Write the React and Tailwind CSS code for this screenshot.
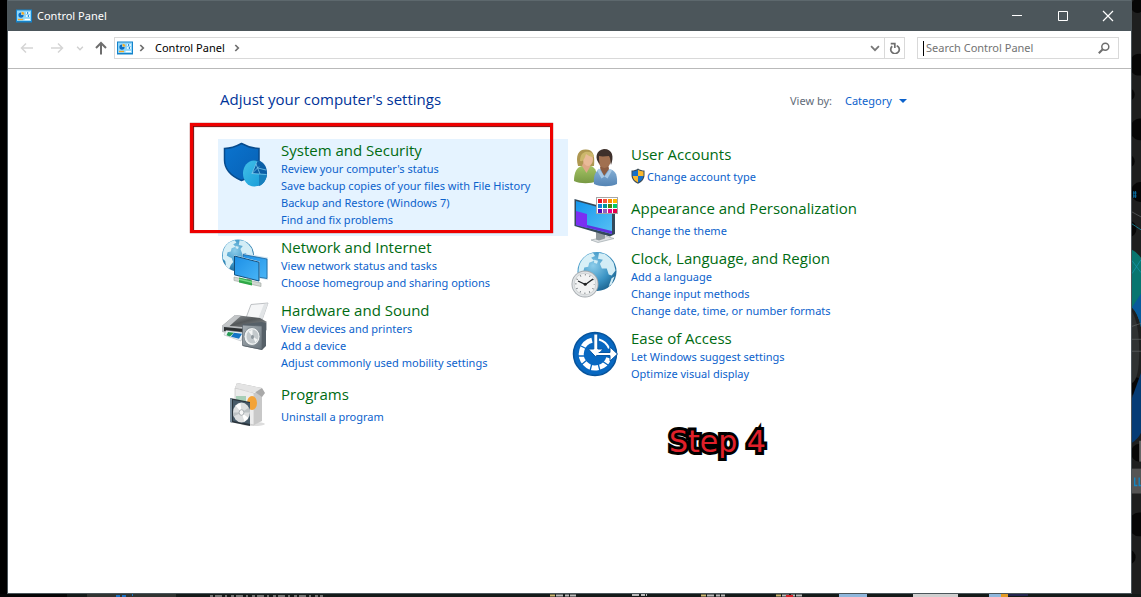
import React from 'react';

const FONT = "font-['Noto_Sans',sans-serif]";

function PanelIcon() {
  return (
    <svg viewBox="0 0 16 14" className="h-[14px] w-4 shrink-0" aria-hidden="true">
      <rect width="16" height="13" y=".5" fill="#1583cb" />
      <rect x="1" y="1.5" width="14" height="10.5" fill="#8ed6fa" />
      <path d="M5 3.500a2.600 2.600 0 1 0 2.600 2.600H5z" fill="#0c6dc4" />
      <path d="M5.600 2.700v2.800h2.800a2.800 2.800 0 0 0-2.800-2.800z" fill="#f7a823" />
      <path d="M10 4h1.500M12.500 4H14M10 7h1.500M12.500 7H14" stroke="#fff" strokeWidth="1.500" />
      <path d="M11 4h1M12 7h1" stroke="#0c6dc4" strokeWidth="1.500" />
      <path d="M2 10.500h5" stroke="#f7a823" strokeWidth="1.300" />
      <path d="M8.500 10.500H14" stroke="#fff" strokeWidth="1.300" />
    </svg>
  );
}

function ArrowIcon({ className, d }) {
  return (
    <svg viewBox="0 0 14 14" className={className} fill="none" stroke="currentColor" aria-hidden="true">
      <path d={d} />
    </svg>
  );
}

function SecurityIcon() {
  return (
    <svg viewBox="0 0 48 48" className="size-12">
      <defs>
        <linearGradient id="sec" x1="0" y1="0" x2="1" y2="1">
          <stop offset="0" stopColor="#0a74cf" />
          <stop offset="1" stopColor="#0760b4" />
        </linearGradient>
        <linearGradient id="pie" x1="0" y1="0" x2="1" y2="1">
          <stop offset="0" stopColor="#42bfe8" />
          <stop offset="1" stopColor="#159bd8" />
        </linearGradient>
      </defs>
      <path d="M3.500 6.500C10 6.500 16 4 20.500 1.500 25 4 31 6.500 38 6.500V18c0 10-7 17-17.500 20.500C10 34 3.500 27 3.500 18z" fill="url(#sec)" stroke="#074b8d" strokeWidth="1.500" />
      <ellipse cx="35" cy="31" rx="11" ry="13" fill="#0d5fa6" />
      <ellipse cx="33" cy="31.500" rx="11" ry="13" fill="url(#pie)" />
      <path d="M31 31.500l5-12.500c5 1.500 9.500 6 9.900 13.500z" fill="#0a5ea6" />
      <path d="M38 32l7.900.5C45.500 38 42 43 38 44z" fill="#1680be" />
      <path d="M31 31.500l5-12M31 31.500l14.500 1M35 22l4 10M31 31.500l7-7M45 28l-8-2" stroke="#8ad7f4" strokeWidth=".7" fill="none" />
    </svg>
  );
}

function Globe({ cx, cy, r, id }) {
  const k = r / 20;
  return (
    <g transform={`translate(${cx} ${cy}) scale(${k})`}>
      <defs>
        <radialGradient id={id} cx=".4" cy=".35" r=".7">
          <stop offset="0" stopColor="#8dcdea" />
          <stop offset=".6" stopColor="#3a93c4" />
          <stop offset="1" stopColor="#1c638f" />
        </radialGradient>
      </defs>
      <circle r="20" fill={`url(#${id})`} />
      <path d="M-17-9c3-6 8-9 13-10l2 3-4 2 3 3-5 2-1 4-4 1-1 4 3 2 3 1 2 5-3 4-2 5-4-4-1-6-3-3c0-5 0-9 2-13z" fill="#d9f0f7" />
      <path d="M2-19l6 1 5 4 4 5 2 8-4 5-3-1-2-6-5 0-2-5 3-4-5-1z" fill="#d3edf6" />
      <path d="M-3-12l4 1-1 3-3-1zM15 7l3-2-3 8-3 2z" fill="#d3edf6" />
    </g>
  );
}

function NetworkIcon() {
  return (
    <svg viewBox="0 0 48 48" className="size-12">
      <defs>
        <linearGradient id="scr" x1="0" y1="0" x2="1" y2="1">
          <stop offset="0" stopColor="#1c8fe6" />
          <stop offset="1" stopColor="#48b4f6" />
        </linearGradient>
      </defs>
      <Globe cx={17} cy={16.500} r={16} id="globeNet" />
      <path d="M21 14l26 4.500V41L24 37z" fill="#cfe4f2" />
      <path d="M22 15.500l24 4.500v19.500L24 36z" fill="url(#scr)" stroke="#17629b" strokeWidth=".8" />
      <path d="M13 16l25.500 6.500V43L13 36.500z" fill="#def0fa" />
      <path d="M13.500 17l24.500 6.200v18.800l-24.500-6.200z" fill="url(#scr)" stroke="#124e7c" strokeWidth="1" />
      <path d="M26 39l4 1v4l-4-1z" fill="#8b9095" />
      <path d="M13 38l27 6v3.500L13 41.500z" fill="#d2d8d3" stroke="#9ba39c" strokeWidth=".6" />
      <path d="M18 38.500l13 3v5L18 43.500z" fill="#2fa847" />
      <path d="M18 39.500l13 3V44l-13-3z" fill="#74d983" />
    </svg>
  );
}

function HardwareIcon() {
  return (
    <svg viewBox="0 0 48 48" className="size-12">
      <defs>
        <linearGradient id="prn" x1="0" y1="0" x2="1" y2="1">
          <stop offset="0" stopColor="#a3a7aa" />
          <stop offset=".5" stopColor="#54585a" />
          <stop offset="1" stopColor="#8d9295" />
        </linearGradient>
        <linearGradient id="spk" x1="0" y1="0" x2="1" y2="1">
          <stop offset="0" stopColor="#a8b0b5" />
          <stop offset="1" stopColor="#69747c" />
        </linearGradient>
      </defs>
      <path d="M25 16L30 2.500l17-1.500-6 17z" fill="#f5f6f7" stroke="#aeb3b6" strokeWidth=".8" />
      <path d="M43 2l4-.6L41 18l-4-1z" fill="#e1e4e6" />
      <path d="M14 13l25 3 7 4-8 6-37-2z" fill="url(#prn)" />
      <path d="M14 13l6 .7L8 24.500 1 24z" fill="#c3c6c8" />
      <path d="M1 24l36 2 9-6v8L34 36 1 30z" fill="#b8bcbf" />
      <path d="M3 25l21 2v4L3 29z" fill="#2c3032" />
      <path d="M5 28.500l18 2-3 8.500L3 33z" fill="#eef3f6" stroke="#aab1b5" strokeWidth=".5" />
      <path d="M7 30l6 .7-4 3.800-3.500-1.200z" fill="#269b55" />
      <path d="M13 30.700l8 1-3 5-8-2z" fill="#1575c5" />
      <path d="M22 22l19-2 4 1v23l-4 4-19-4z" fill="#566068" />
      <path d="M21.500 23l19.500 1v23.500l-19.500-4z" fill="url(#spk)" stroke="#566068" strokeWidth=".7" />
      <ellipse cx="31" cy="34.500" rx="8" ry="9" fill="#edf0f1" stroke="#7a848a" strokeWidth=".8" />
      <ellipse cx="31.500" cy="34.500" rx="6" ry="7" fill="#c3c9cc" />
      <path d="M31.500 34.500l-4-5 4-2zM31.500 34.500l5 3-2 3z" fill="#f3f5f5" />
      <ellipse cx="31.500" cy="35" rx="1.500" ry="2" fill="#8c969c" />
    </svg>
  );
}

function ProgramsIcon() {
  return (
    <svg viewBox="0 0 48 48" className="size-12">
      <ellipse cx="32" cy="42" rx="12" ry="2" fill="#ddd" />
      <path d="M14 6l19 5v32l-19-4z" fill="#ececec" stroke="#bdbdbd" strokeWidth=".6" />
      <path d="M33 11l8-3v31l-8 4z" fill="#c8c8c8" />
      <path d="M16 1l25 5 3 5-3 4-7-5-20-4z" fill="#a9a9a9" />
      <path d="M16 1l25 5-7 4.500-20-4.500z" fill="#e4e4e4" />
      <path d="M15 14l10 0v14H15z" fill="#a7cfb8" />
      <ellipse cx="31" cy="21" rx="5" ry="7" fill="#f3a338" />
      <path d="M9 16l20 4v24L9 40z" fill="#29333b" />
      <path d="M9 16l2 .4v24L9 40z" fill="#7b8e9d" />
      <path d="M12 18l17 3v21l-17-3z" fill="#475a68" />
      <ellipse cx="20.500" cy="30.500" rx="8.500" ry="10" fill="#dcdedf" />
      <path d="M20.500 30.500l-6-7 5-2.500zM20.500 30.500l7 5.500-4 3.500z" fill="#fff" />
      <path d="M20.500 30.500l7.500-5 1 5zM20.500 30.500l-8 4-.5-4z" fill="#bcc1c3" />
      <ellipse cx="20.500" cy="30.500" rx="2.400" ry="2.800" fill="#f7f7f7" stroke="#9aa1a5" strokeWidth=".8" />
    </svg>
  );
}

function UsersIcon() {
  return (
    <svg viewBox="0 0 48 48" className="size-12">
      <defs>
        <linearGradient id="ub" x1="0" y1="0" x2="0" y2="1">
          <stop offset="0" stopColor="#86b0d6" />
          <stop offset="1" stopColor="#5484b4" />
        </linearGradient>
        <linearGradient id="ug" x1="0" y1="0" x2="0" y2="1">
          <stop offset="0" stopColor="#a5c465" />
          <stop offset="1" stopColor="#779943" />
        </linearGradient>
      </defs>
      <path d="M7 24C4 13 8 7 15 7.500S24 12 23 24z" fill="#ae9750" />
      <path d="M3 39c0-9 3-14 8-15h9c5 2 6 6 6 15-6 3-17 3-23 0z" fill="url(#ug)" />
      <path d="M11 24l4.500 7 4-7-1-4h-6z" fill="#dda886" />
      <ellipse cx="17" cy="17" rx="5" ry="7" fill="#e9ba98" />
      <path d="M9 19c0-8 5-10 9-9 3 0 5 3 5 5-4 0-6-2-8-3-1 3-2 8-6 7z" fill="#ccb76c" />
      <path d="M23 42c-1-9 2-14 7-15l10 .500c5 2 6.500 6 6 14.500-6 3-17 3-23 0z" fill="url(#ub)" />
      <path d="M29 26l4 8 5-7-1-5h-7z" fill="#8b5c42" />
      <ellipse cx="33.500" cy="17.500" rx="6.500" ry="8.500" fill="#a17050" />
      <path d="M28 14c0 4 0 5 1 8-6-5-4-14 4-15 9 0 10 8 7 16-1-3 0-6-2-9-3 0-6 1-10 0z" fill="#3e302b" />
      <path d="M28 26.500l5.500 8-3 2-4.500-8zM39 27l-5.500 7.500 3 2 4.500-8z" fill="#a8c8e4" />
    </svg>
  );
}

const swatches = [
  ['#e81123', '#f7533b', '#ff8c00', '#ffb900'],
  ['#1080d8', '#00949b', '#438908', '#00cc6a'],
  ['#5208ba', '#8f62bb', '#e3008c', '#e80047'],
];

function AppearanceIcon() {
  return (
    <svg viewBox="0 0 48 48" className="size-12">
      <defs>
        <linearGradient id="mon" x1="0" y1="0" x2="1" y2="1">
          <stop offset="0" stopColor="#1496ed" />
          <stop offset="1" stopColor="#58c1f4" />
        </linearGradient>
      </defs>
      <path d="M20 44l16-3.500 7 2-16 4z" fill="#dfe2e4" stroke="#9ea7ac" strokeWidth=".7" />
      <path d="M25 36l9 2v4.500l-6 2-3-1z" fill="#90999e" />
      <path d="M3.500 3L44 14v24l-5 2.500L3.500 30z" fill="#34495a" />
      <path d="M5 5l36 10v23L5 29z" fill="url(#mon)" />
      <path d="M5 15l11 3v14L5 29z" fill="#7b2ff2" />
      <path d="M16 29l25 6v3l-25-6.500z" fill="#6230e0" />
      <rect x="25.500" y="1.500" width="21" height="16" fill="#fff" stroke="#a6a6a6" />
      {swatches.map((row, y) =>
        row.map((c, x) => <rect key={c} x={27 + x * 5} y={3 + y * 5} width="4" height="4" fill={c} />)
      )}
    </svg>
  );
}

function ClockIcon() {
  return (
    <svg viewBox="0 0 48 48" className="size-12">
      <Globe cx={26} cy={21.500} r={19.500} id="globeClock" />
      <circle cx="14" cy="34" r="13.500" fill="#a3a9ad" />
      <circle cx="14" cy="34" r="12.600" fill="#e1e4e6" />
      <circle cx="14" cy="34" r="10.800" fill="#f2f3f3" stroke="#c3c7c9" strokeWidth=".7" />
      <circle cx="14" cy="34" r="9.200" fill="none" stroke="#697075" strokeWidth="1.600" strokeDasharray=".8 4.017" strokeDashoffset=".4" />
      <path d="M7 31l7.500 3.500L22 29" fill="none" stroke="#202326" strokeWidth="1.300" />
      <circle cx="14.200" cy="34.200" r="1.500" fill="#222" />
    </svg>
  );
}

function EaseIcon() {
  return (
    <svg viewBox="0 0 48 48" className="size-12">
      <circle cx="24" cy="24" r="21.500" fill="#0868c1" stroke="#07539b" strokeWidth="1.500" />
      <path d="M21 10.300A14 14 0 1 0 37.700 28" fill="none" stroke="#fff" strokeWidth="5" />
      <path d="M10 16l6 3M7 26h7M10 35l6-5M19 41l2-8M29 41l-2-8M37 35l-6-4" stroke="#0868c1" strokeWidth="1.300" />
      <path d="M28 9.500a15 15 0 0 1 10 9" fill="none" stroke="#fff" strokeWidth="2" />
      <path d="M22.800 4h4v15h5.400L24.800 27l-7.400-8h5.400z" fill="#fff" stroke="#0757a4" strokeWidth="1" />
      <path d="M25 22.500h14V17l7.500 7-7.500 7v-5.500H25z" fill="#fff" stroke="#0757a4" strokeWidth="1" />
      <path d="M20.500 21.500h8L24.800 26z" fill="#fff" />
    </svg>
  );
}

function UacShield() {
  return (
    <svg viewBox="0 0 16 16" className="-ml-px size-4 shrink-0" aria-hidden="true">
      <path d="M8 .5c2 1.500 4 2 6.500 2V7c0 4-2.500 7-6.500 8.700C4 14 1.500 11 1.500 7V2.500C4 2.500 6 2 8 .5z" fill="#3a4a57" />
      <path d="M8 1.800V8H2.500V3.500C4.500 3.400 6.400 2.900 8 1.800zM8 8h5.300C13 11 11 13.200 8 14.500z" fill="#1670c9" />
      <path d="M8 1.800c1.600 1.100 3.500 1.600 5.500 1.700V8H8zM8 8H2.700C3 11 5 13.200 8 14.500z" fill="#f9b82c" />
    </svg>
  );
}

const left = [
  {
    title: 'System and Security',
    Icon: SecurityIcon,
    active: true,
    links: ["Review your computer's status", 'Save backup copies of your files with File History', 'Backup and Restore (Windows 7)', 'Find and fix problems'],
  },
  { title: 'Network and Internet', Icon: NetworkIcon, links: ['View network status and tasks', 'Choose homegroup and sharing options'] },
  { title: 'Hardware and Sound', Icon: HardwareIcon, links: ['View devices and printers', 'Add a device', 'Adjust commonly used mobility settings'] },
  { title: 'Programs', Icon: ProgramsIcon, links: ['Uninstall a program'] },
];

const right = [
  { title: 'User Accounts', Icon: UsersIcon, shield: true, links: ['Change account type'] },
  { title: 'Appearance and Personalization', Icon: AppearanceIcon, links: ['Change the theme'] },
  { title: 'Clock, Language, and Region', Icon: ClockIcon, links: ['Add a language', 'Change input methods', 'Change date, time, or number formats'] },
  { title: 'Ease of Access', Icon: EaseIcon, links: ['Let Windows suggest settings', 'Optimize visual display'] },
];

function Category({ title, Icon, links, active, shield }) {
  const single = links.length === 1;
  return (
    <section className={`relative flex gap-3 pl-[3px] ${single ? 'pb-1.5' : 'pb-2'} ${active ? 'bg-[#e5f3ff]' : ''}`}>
      <div className="h-12 w-12 shrink-0 pt-[3px]" aria-hidden="true">
        <Icon />
      </div>
      <div className={single ? 'pt-1' : ''}>
        <h2 className="pt-[2px] font-['Open_Sans'] text-[15px] leading-[19px] whitespace-nowrap text-[#006b12]">
          <a href="#">{title}</a>
        </h2>
        <ul className={single ? 'pt-1' : ''}>
          {links.map((l) => (
            <li key={l} className="flex gap-px text-[11px] leading-[17px] whitespace-nowrap text-[#0b62cc]">
              {shield && <UacShield />}
              <a href="#">{l}</a>
            </li>
          ))}
        </ul>
      </div>
      {active && (
        <div className="absolute -top-4 right-[15px] bottom-[3px] -left-7 border-3 border-[#ee0000] shadow-[inset_1px_1px_1px_#7a0000,0_0_1px_#7a0000]" />
      )}
    </section>
  );
}

function TitleBar() {
  return (
    <header className="flex h-[31px] items-center border-t border-[#5d686d] bg-[#4c565b] pl-2 text-white">
      <PanelIcon />
      <h1 className="flex-1 pl-[5px] text-[11px]">Control Panel</h1>
      <button aria-label="Minimize" className="flex h-full w-[46px] items-center justify-center">
        <svg viewBox="0 0 12 12" className="size-3" stroke="#fff"><path d="M1 5.500h10" /></svg>
      </button>
      <button aria-label="Maximize" className="flex h-full w-[45px] items-center justify-center">
        <svg viewBox="0 0 12 12" className="size-3" stroke="#fff" fill="none"><path d="M1.500 1.500h9v9h-9z" /></svg>
      </button>
      <button aria-label="Close" className="flex h-full w-[46px] items-center justify-center">
        <svg viewBox="0 0 12 12" className="size-3" stroke="#fff"><path d="M1 1l10 10M11 1L1 11" strokeWidth="1.200" /></svg>
      </button>
    </header>
  );
}

function Toolbar() {
  return (
    <nav className="flex h-[38px] items-center border-b border-[#b9b9b9] pr-3 pb-[3px] pl-3 text-[11px]">
      <button aria-label="Back" className="mr-4 text-[#d5d5d5]">
        <ArrowIcon className="size-[14px] stroke-[1.500]" d="M13 7H1.500M6 2.500L1.500 7 6 11.500" />
      </button>
      <button aria-label="Forward" className="mr-3 text-[#d5d5d5]">
        <ArrowIcon className="size-[14px] stroke-[1.500]" d="M1 7h11.500M8 2.500L12.500 7 8 11.500" />
      </button>
      <button aria-label="Recent locations" className="mr-[10px] text-[#cfcfcf]">
        <ArrowIcon className="size-2 stroke-[2.500]" d="M2 5l5 5 5-5" />
      </button>
      <button aria-label="Up" className="mr-[6px] text-[#6e6e6e]">
        <ArrowIcon className="size-[14px] stroke-2" d="M7 13.500V2M2 7l5-5 5 5" />
      </button>
      <div className="flex h-[22px] flex-1 items-center border border-[#d9d9d9] pl-[2px]">
        <PanelIcon />
        <ArrowIcon className="mx-[3px] size-3 text-[#6e6e6e] stroke-2" d="M5 3.500L8.500 7 5 10.500" />
        <a href="#" className="px-1 leading-4 text-black">Control Panel</a>
        <ArrowIcon className="mx-[2px] size-3 text-[#6e6e6e] stroke-2" d="M5 3.500L8.500 7 5 10.500" />
        <button aria-label="Previous locations" className="ml-auto px-[4px] text-[#777]">
          <ArrowIcon className="size-[10px] stroke-[2.500]" d="M1.500 4.500L7 10l5.500-5.500" />
        </button>
        <button aria-label="Refresh" className="flex h-full w-5 items-center justify-center border-l border-[#d9d9d9] text-[#6e6e6e]">
          <ArrowIcon className="size-3 stroke-2" d="M3.800 5a5 4.800 0 1 0 6.800.3L9 4.200M2 2h4.800v5" />
        </button>
      </div>
      <label className="ml-3 flex h-[22px] w-[202px] items-center border border-[#d9d9d9] pr-2 pl-[5px]">
        <span className="h-[15px] w-px bg-black" />
        <input aria-label="Search Control Panel" placeholder="Search Control Panel" className="min-w-0 flex-1 pl-[2px] outline-none placeholder:text-[#737373]" />
        <svg viewBox="0 0 12 12" className="size-3" fill="none" stroke="#6e6e6e">
          <circle cx="7.300" cy="4.700" r="3.500" strokeWidth="1.500" />
          <path d="M4.800 7.200L.8 11.200" strokeWidth="2" />
        </svg>
      </label>
    </nav>
  );
}

function DesktopEdge() {
  return (
    <svg viewBox="0 0 10 597" preserveAspectRatio="none" className="h-full w-full" aria-hidden="true">
      <rect width="10" height="597" fill="#1e1f1f" />
      <g fill="#060606">
        <circle cx="6" cy="6" r="7" /><circle cx="8" cy="65" r="11" /><circle cx="-3" cy="95" r="6" />
        <circle cx="9" cy="130" r="11" /><circle cx="-3" cy="162" r="6" /><circle cx="9" cy="193" r="10" />
        <circle cx="-3" cy="230" r="8" /><circle cx="3" cy="388" r="9" /><circle cx="8" cy="455" r="9" />
        <circle cx="8" cy="527" r="12" /><circle cx="-3" cy="560" r="7" />
      </g>
      <path d="M0 251q5 2 10 8v70Q7 315 0 309z" fill="#08756f" />
      <path d="M0 309l10-14v34Q7 315 0 309z" fill="#085a9c" />
      <path d="M0 313q8 12 8 40T0 385z" fill="#303333" />
      <path d="M0 400q6-15 10-25v60q-3 6-10 10z" fill="#063c75" />
      <path d="M0 225l10 6M0 262l10 12M0 275l10-14" stroke="#1697ad" strokeWidth=".8" />
      <path d="M0 213l10 5M0 341h10M0 328l10-3M0 353h10" stroke="#64686a" strokeWidth=".7" />
      <path d="M1 194h4M1 197h4M2 192v7M4 192v7" stroke="#0872a8" />
      <rect x="8" y="443" width="2" height="21" fill="#666" />
      <rect y="471" width="10" height="25" fill="#555" />
      <path d="M3 480v8h3M8 480v8h2" stroke="#1487c5" strokeWidth="1.500" fill="none" />
    </svg>
  );
}

function TaskbarEdge() {
  return (
    <svg viewBox="0 0 1141 3" preserveAspectRatio="none" className="h-[3px] w-full" aria-hidden="true">
      <rect width="1141" height="3" fill="#141a18" />
      <path d="M0 1.500h67" stroke="#050505" strokeWidth="3" />
      <path d="M87 1.500h89" stroke="#303431" strokeWidth="3" />
      <path d="M116 2h4M122 2h4M132 1h1" stroke="#1b71c4" strokeWidth="2" />
      <path d="M210 2h113" stroke="#727472" strokeWidth="2" strokeDasharray="3 2 7 3 2 4" />
      <path d="M550 1.500h5M701 1.500h5M776 1.500h5" stroke="#cab56f" strokeWidth="2" />
      <path d="M556 1.500h20M632 1h15M707 1.500h18M782 1.500h20" stroke="#b9b9b9" strokeWidth="2" strokeDasharray="7 2 4 1" />
      <path d="M786 2h7" stroke="#d42127" strokeWidth="2" />
      <path d="M839 1.500h28M989 1.500h12" stroke="#8fb7dc" strokeWidth="3" />
      <path d="M913 1.500h45" stroke="#cfcfcf" strokeWidth="3" />
      <path d="M1001 1.500h7" stroke="#e39b25" strokeWidth="3" />
      <path d="M1008 1h20" stroke="#24264d" strokeWidth="2" />
    </svg>
  );
}

export default function App() {
  return (
    <div className={`flex min-h-screen flex-col bg-black ${FONT}`}>
      <div className="grid flex-1 grid-cols-[7px_minmax(0,1fr)_9px]">
        <div className="bg-black" />
        <div className="flex flex-col border-x border-b border-[#4c565b] bg-white">
          <TitleBar />
          <Toolbar />
          <main className="mx-auto w-full max-w-[703px] pr-[3px]">
            <div className="flex h-[70px] items-start justify-between pt-5 pr-[11px] pl-[2px]">
              <h2 className="font-['Open_Sans'] text-[15px] leading-5 text-[#003399]">Adjust your computer's settings</h2>
              <div className="flex h-6 items-center text-[11px]">
                <label htmlFor="view" className="pr-[13px] text-[#5f6b78]">View by:</label>
                <select id="view" className="w-[54px] appearance-none text-[#0b62cc] outline-none">
                  <option>Category</option>
                </select>
                <svg viewBox="0 0 8 4" className="h-1 w-2" fill="#0b62cc" aria-hidden="true"><path d="M0 0h8L4 4z" /></svg>
              </div>
            </div>
            <div className="grid grid-cols-2">
              <div>{left.map((c) => <Category key={c.title} {...c} />)}</div>
              <div>
                {right.map((c) => <Category key={c.title} {...c} />)}
                <p className="mt-8 pl-[101px] font-['DejaVu_Sans'] text-[30px] leading-10 text-[#e0202a] [stroke-linejoin:round] [-webkit-text-stroke:6px_#000] [paint-order:stroke_fill]">Step 4</p>
              </div>
            </div>
          </main>
        </div>
        <div className="relative overflow-hidden">
          <div className="absolute inset-0"><DesktopEdge /></div>
        </div>
      </div>
      <TaskbarEdge />
    </div>
  );
}
